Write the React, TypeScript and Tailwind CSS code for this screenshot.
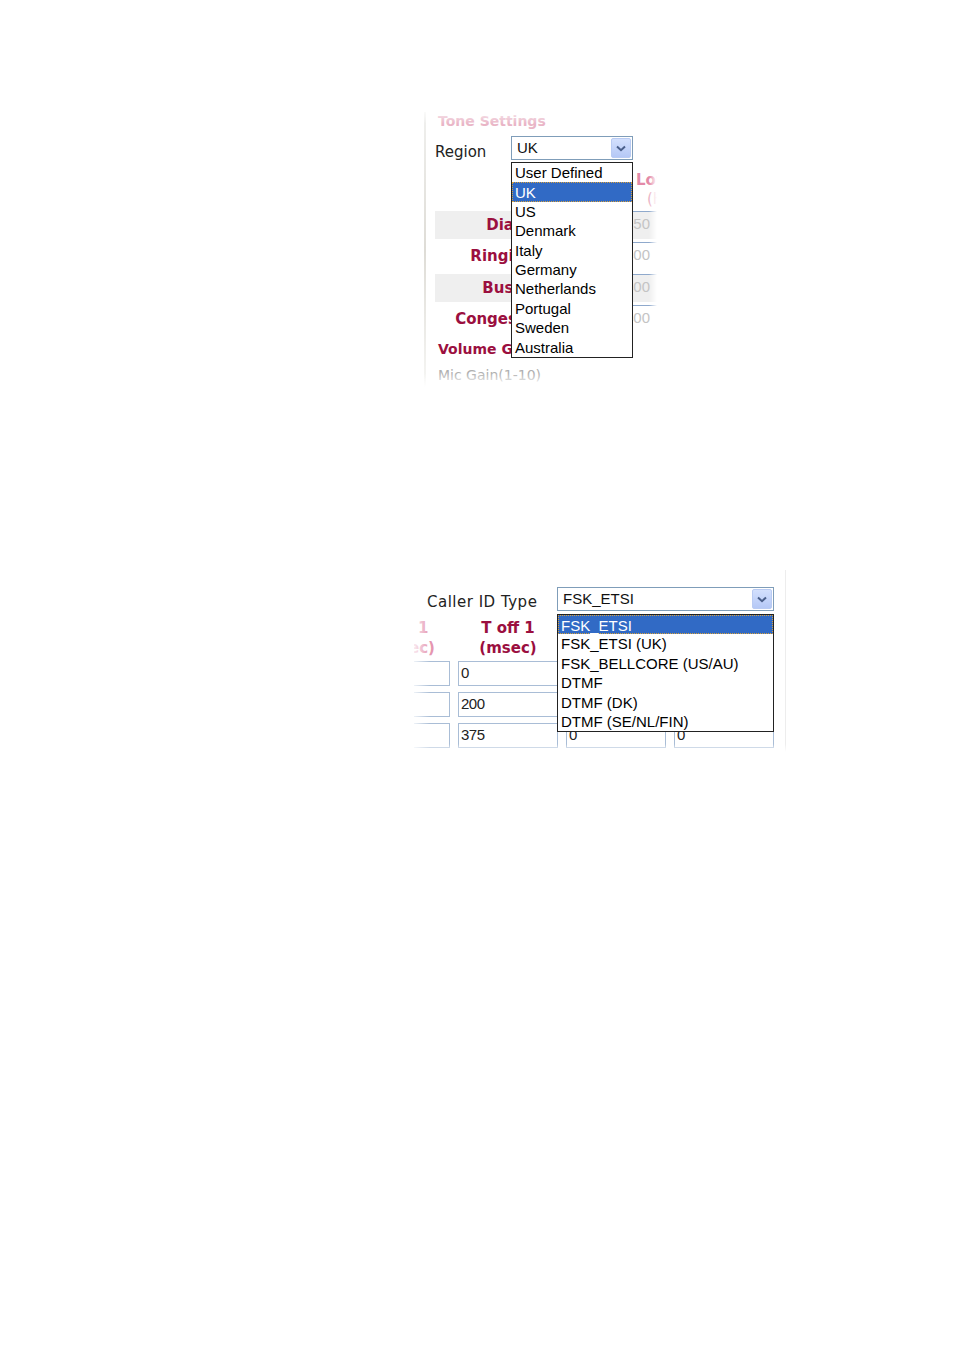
import React from 'react';

const sans = { fontFamily: '"Liberation Sans", Arial, sans-serif' };
const verdana = { fontFamily: '"DejaVu Sans", Verdana, sans-serif' };

function Arrow() {
    return (
        <div className="h-[20px] w-[20px] rounded-[2px] border border-[#b9cbf3] bg-gradient-to-b from-[#d3e0fd] to-[#b5c8f6] flex items-center justify-center">
            <svg width="10" height="7" viewBox="0 0 10 7">
                <path d="M1 1.5 L5 5.2 L9 1.5" fill="none" stroke="#4a5f8a" strokeWidth="2" />
            </svg>
        </div>
    );
}

function Select({ value, width }: { value: string; width: string }) {
    return (
        <div className={`${width} shrink-0 h-[24px] border border-[#7f9db9] bg-white flex items-center justify-between pl-[5px] pr-[1px] text-[15px] text-[#111]`} style={sans}>
            <span>{value}</span>
            <Arrow />
        </div>
    );
}

function ListBox({ items, selected, width, top, left }: { items: string[]; selected: number; width: string; top: string; left: string }) {
    return (
        <div className={`absolute ${top} ${left} ${width} border border-[#222] bg-white text-[15px] text-black leading-[19.4px]`} style={sans}>
            {items.map((item, i) => (
                <div
                    key={item}
                    className={i === selected
                        ? 'h-[19.4px] px-[2px] bg-[#316ac5] text-white border border-dotted border-[#d9a13c] whitespace-nowrap'
                        : 'h-[19.4px] px-[3px] whitespace-nowrap'}
                >
                    {item}
                </div>
            ))}
        </div>
    );
}

function Box({ value, width }: { value?: string; width: string }) {
    return (
        <div className={`${width} shrink-0 h-[25px] border border-[#a9bdd6] bg-white flex items-center px-[2px] text-[15px] text-[#222] tracking-[-0.5px]`} style={sans}>
            {value}
        </div>
    );
}

const regions = ['User Defined', 'UK', 'US', 'Denmark', 'Italy', 'Germany', 'Netherlands', 'Portugal', 'Sweden', 'Australia'];
const callerTypes = ['FSK_ETSI', 'FSK_ETSI (UK)', 'FSK_BELLCORE (US/AU)', 'DTMF', 'DTMF (DK)', 'DTMF (SE/NL/FIN)'];

const tones = [
    { label: 'Dial Tone', value: '350', shaded: true },
    { label: 'Ringing Tone', value: '400', shaded: false },
    { label: 'Busy Tone', value: '400', shaded: true },
    { label: 'Congestion Tone', value: '400', shaded: false },
];

function ToneSettings() {
    return (
        <div className="relative w-[235px] h-[275px] overflow-hidden">
            <div className="absolute left-[2px] top-0 bottom-0 w-[2px] bg-gradient-to-b from-[#f0f0ee] via-[#dedcd6] to-[#f6f6f4]" />
            <div className="pl-[13px]">
                <div className="h-[20px] -mt-[1px] pl-[3px] text-[14px] font-bold text-[#e9b5c6]" style={verdana}>Tone Settings</div>
                <div className="flex items-center h-[24px] mt-[5px]">
                    <div className="w-[76px] shrink-0 pt-[8px] text-[15px] text-[#222]" style={verdana}>Region</div>
                    <Select value="UK" width="w-[122px]" />
                </div>
                <div className="h-[44px] mt-[5px] ml-[190px] flex flex-col pt-[6px] text-[15px] font-bold text-[#e38aa8] leading-[19px] whitespace-nowrap" style={verdana}>
                    <span className="ml-[11px]">Low</span>
                    <span className="ml-[22px] font-normal text-[#eab3c6]">(Hz)</span>
                </div>
                <div className="flex flex-col">
                    {tones.map(t => (
                        <div key={t.label} className="flex items-center h-[31.5px]">
                            <div className={`w-[180px] shrink-0 h-[28px] flex items-center justify-center whitespace-nowrap text-[15px] font-bold text-[#9b0f3f] ${t.shaded ? 'bg-[#efefef]' : ''}`} style={verdana}>
                                {t.label}
                            </div>
                            <div className={`h-[28px] shrink-0 pl-[7px] flex items-start ${t.shaded ? 'bg-[#efefef]' : ''}`}>
                                <div className="w-[60px] h-[25px] border-t border-[#8fa9cc] flex items-center pl-[3px] text-[15px] text-[#c4c4c4]" style={sans}>
                                    {t.value}
                                </div>
                            </div>
                        </div>
                    ))}
                </div>
                <div className="h-[29px] flex items-center pl-[3px] text-[14px] font-bold text-[#9b0f3f]" style={verdana}>Volume Gain</div>
                <div className="h-[22px] flex items-center pl-[3px] text-[14px] text-[#b0b0b0]" style={verdana}>Mic Gain(1-10)</div>
            </div>
            <ListBox items={regions} selected={1} width="w-[122px]" top="top-[50px]" left="left-[89px]" />
            <div className="absolute right-0 top-0 bottom-0 w-[8px] bg-gradient-to-r from-transparent to-white" />
            <div className="absolute left-0 right-0 bottom-0 h-[14px] bg-gradient-to-b from-transparent to-white" />
            <div className="absolute left-0 right-0 top-0 h-[12px] bg-gradient-to-t from-transparent to-white/70" />
        </div>
    );
}

function CallerId() {
    const rows = [
        ['', '0', '', ''],
        ['', '200', '', ''],
        ['', '375', '0', '0'],
    ];
    return (
        <div className="relative w-[375px] h-[182px] overflow-hidden">
            <div className="absolute right-[3px] top-0 bottom-0 w-[1px] bg-[#ededed]" />
            <div className="flex items-center h-[24px] mt-[17px]">
                <div className="w-[143px] shrink-0 pl-[13px] pt-[7px] text-[15px] tracking-[0.5px] text-[#222]" style={verdana}>Caller ID Type</div>
                <Select value="FSK_ETSI" width="w-[217px]" />
            </div>
            <div className="flex h-[48px] mt-[2px] pt-[5px] text-[15px] font-bold leading-[20px]" style={verdana}>
                <div className="w-[40px] flex flex-col items-start pl-[3px] text-[#e596b0]">
                    <span className="pl-[1px]">1</span>
                    <span className="-ml-[8px]">ec)</span>
                </div>
                <div className="w-[108px] flex flex-col items-center text-[#9b0f3f]">
                    <span>T off 1</span>
                    <span>(msec)</span>
                </div>
            </div>
            <div className="flex flex-col gap-[6px]">
                {rows.map((r, i) => (
                    <div key={i} className="flex gap-[8px] -ml-[2px]">
                        <Box value={r[0]} width="w-[38px]" />
                        <Box value={r[1]} width="w-[100px]" />
                        <Box value={r[2]} width="w-[100px]" />
                        <Box value={r[3]} width="w-[100px]" />
                    </div>
                ))}
            </div>
            <ListBox items={callerTypes} selected={0} width="w-[217px]" top="top-[44px]" left="left-[143px]" />
            <div className="absolute left-0 top-0 bottom-0 w-[16px] bg-gradient-to-r from-white/80 to-transparent" />
            <div className="absolute left-0 right-0 bottom-0 h-[8px] bg-gradient-to-b from-transparent to-white" />
        </div>
    );
}

export default function App() {
    return (
        <div className="w-[954px] h-[1351px] bg-white overflow-hidden">
            <div className="pt-[112px] pl-[422px]">
                <ToneSettings />
            </div>
            <div className="mt-[183px] pl-[414px]">
                <CallerId />
            </div>
        </div>
    );
}
